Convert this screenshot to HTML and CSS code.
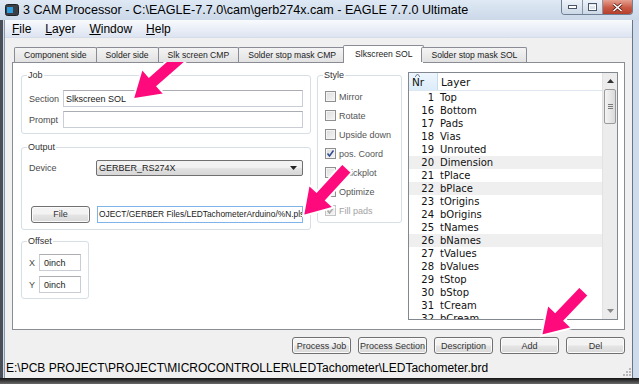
FILE: index.html
```html
<!DOCTYPE html>
<html lang="en">
<head>
    <meta charset="UTF-8">
    <meta name="viewport" content="width=device-width, initial-scale=1.0">
    <title>CAM Processor</title>
    <link rel="stylesheet" href="styles.css">
</head>
<body>
    <div class="window">
        <div class="title-bar">
            <div class="title-left">
                <svg class="app-icon" width="14" height="12" viewBox="0 0 14 12">
                    <rect x="0.5" y="0.5" width="13" height="11" rx="2" fill="#3b3f45" stroke="#1f2226"/>
                    <rect x="2" y="3" width="6" height="6" fill="#2c9ee0"/>
                </svg>
                <span class="title-text">3 CAM Processor - C:\EAGLE-7.7.0\cam\gerb274x.cam - EAGLE 7.7.0 Ultimate</span>
            </div>
            <div class="win-buttons">
                <div class="win-btn">
                    <svg width="9" height="4" viewBox="0 0 9 4"><rect x="0.5" y="0.5" width="8" height="3" fill="#fff" stroke="#4b5568"/></svg>
                </div>
                <div class="win-btn">
                    <svg width="9" height="8" viewBox="0 0 9 8"><rect x="0.5" y="0.5" width="8" height="7" fill="none" stroke="#4b5568"/><rect x="1.5" y="2.5" width="6" height="4" fill="none" stroke="#fff"/></svg>
                </div>
                <div class="win-btn close">
                    <svg width="11" height="9" viewBox="0 0 11 9"><path d="M1.5 1 L9.5 8 M9.5 1 L1.5 8" stroke="#5a2018" stroke-width="3"/><path d="M1.5 1 L9.5 8 M9.5 1 L1.5 8" stroke="#fff" stroke-width="1.6"/></svg>
                </div>
            </div>
        </div>

        <div class="client">
            <div class="menu-bar">
                <span class="menu-item"><u>F</u>ile</span>
                <span class="menu-item"><u>L</u>ayer</span>
                <span class="menu-item"><u>W</u>indow</span>
                <span class="menu-item"><u>H</u>elp</span>
            </div>

            <div class="main">
                <div class="tabs">
                    <div class="tab">Component side</div>
                    <div class="tab">Solder side</div>
                    <div class="tab">Slk screen CMP</div>
                    <div class="tab">Solder stop mask CMP</div>
                    <div class="tab active">Slkscreen SOL</div>
                    <div class="tab">Solder stop mask SOL</div>
                </div>

                <div class="tab-panel">
                    <div class="left-col">
                        <fieldset class="group job">
                            <legend>Job</legend>
                            <div class="field-row">
                                <span class="field-label">Section</span>
                                <div class="text-box">Slkscreen SOL</div>
                            </div>
                            <div class="field-row">
                                <span class="field-label">Prompt</span>
                                <div class="text-box"></div>
                            </div>
                        </fieldset>

                        <fieldset class="group output">
                            <legend>Output</legend>
                            <div class="field-row device-row">
                                <span class="field-label wide">Device</span>
                                <div class="combo">
                                    <span>GERBER_RS274X</span>
                                    <svg width="7" height="4" viewBox="0 0 7 4"><path d="M0 0 H7 L3.5 4 Z" fill="#222"/></svg>
                                </div>
                            </div>
                            <div class="field-row file-row">
                                <div class="btn file-btn">File</div>
                                <div class="text-box focused">OJECT/GERBER Files/LEDTachometerArduino<span class="caret"></span>/%N.pls</div>
                            </div>
                        </fieldset>

                        <fieldset class="group offset">
                            <legend>Offset</legend>
                            <div class="field-row">
                                <span class="field-label short">X</span>
                                <div class="text-box">0inch</div>
                            </div>
                            <div class="field-row">
                                <span class="field-label short">Y</span>
                                <div class="text-box">0inch</div>
                            </div>
                        </fieldset>
                    </div>

                    <fieldset class="group style">
                        <legend>Style</legend>
                        <div class="check-row"><span class="checkbox"></span>Mirror</div>
                        <div class="check-row"><span class="checkbox"></span>Rotate</div>
                        <div class="check-row"><span class="checkbox"></span>Upside down</div>
                        <div class="check-row"><span class="checkbox checked"><svg width="9" height="9" viewBox="0 0 9 9"><path d="M1.5 4.5 L3.5 7 L7.5 1.5" fill="none" stroke="#2f4c8f" stroke-width="1.5"/></svg></span>pos. Coord</div>
                        <div class="check-row"><span class="checkbox"></span>Quickplot</div>
                        <div class="check-row"><span class="checkbox"></span>Optimize</div>
                        <div class="check-row disabled"><span class="checkbox checked"><svg width="9" height="9" viewBox="0 0 9 9"><path d="M1.5 4.5 L3.5 7 L7.5 1.5" fill="none" stroke="#a9a9a9" stroke-width="1.5"/></svg></span>Fill pads</div>
                    </fieldset>

                    <div class="layer-list">
                        <div class="list-main">
                            <div class="list-head">
                                <div class="col-nr">
                                    <svg class="sort-mark" width="5" height="3" viewBox="0 0 5 3"><path d="M0 3 L2.5 0 L5 3" fill="none" stroke="#6d7f97"/></svg>
                                    Nr
                                </div>
                                <div class="col-name">Layer</div>
                            </div>
                            <div class="list-rows">
                                <div class="row"><span class="nr">1</span><span class="name">Top</span></div>
                                <div class="row"><span class="nr">16</span><span class="name">Bottom</span></div>
                                <div class="row"><span class="nr">17</span><span class="name">Pads</span></div>
                                <div class="row"><span class="nr">18</span><span class="name">Vias</span></div>
                                <div class="row"><span class="nr">19</span><span class="name">Unrouted</span></div>
                                <div class="row sel"><span class="nr">20</span><span class="name">Dimension</span></div>
                                <div class="row"><span class="nr">21</span><span class="name">tPlace</span></div>
                                <div class="row sel"><span class="nr">22</span><span class="name">bPlace</span></div>
                                <div class="row"><span class="nr">23</span><span class="name">tOrigins</span></div>
                                <div class="row"><span class="nr">24</span><span class="name">bOrigins</span></div>
                                <div class="row"><span class="nr">25</span><span class="name">tNames</span></div>
                                <div class="row sel"><span class="nr">26</span><span class="name">bNames</span></div>
                                <div class="row"><span class="nr">27</span><span class="name">tValues</span></div>
                                <div class="row"><span class="nr">28</span><span class="name">bValues</span></div>
                                <div class="row"><span class="nr">29</span><span class="name">tStop</span></div>
                                <div class="row"><span class="nr">30</span><span class="name">bStop</span></div>
                                <div class="row"><span class="nr">31</span><span class="name">tCream</span></div>
                                <div class="row"><span class="nr">32</span><span class="name">bCream</span></div>
                            </div>
                        </div>
                        <div class="scrollbar">
                            <div class="scroll-arrow">
                                <svg width="7" height="4" viewBox="0 0 7 4"><path d="M0 4 L3.5 0 L7 4 Z" fill="#333"/></svg>
                            </div>
                            <div class="scroll-thumb">
                                <svg width="5" height="5" viewBox="0 0 5 5"><path d="M0 0.5 H5 M0 2.5 H5 M0 4.5 H5" stroke="#7a7a7a"/></svg>
                            </div>
                            <div class="scroll-track"></div>
                            <div class="scroll-arrow">
                                <svg width="7" height="4" viewBox="0 0 7 4"><path d="M0 0 L3.5 4 L7 0 Z" fill="#888"/></svg>
                            </div>
                        </div>
                    </div>
                </div>

                <div class="button-row">
                    <div class="btn">Process Job</div>
                    <div class="btn">Process Section</div>
                    <div class="btn">Description</div>
                    <div class="btn">Add</div>
                    <div class="btn">Del</div>
                </div>
            </div>

            <div class="status-bar">
                <span class="status-text">E:\PCB PROJECT\PROJECT\MICROCONTROLLER\LEDTachometer\LEDTachometer.brd</span>
                <svg class="grip" width="9" height="9" viewBox="0 0 9 9">
                    <g fill="#b8b8b8">
                        <rect x="7" y="1" width="2" height="2"/>
                        <rect x="4" y="4" width="2" height="2"/><rect x="7" y="4" width="2" height="2"/>
                        <rect x="1" y="7" width="2" height="2"/><rect x="4" y="7" width="2" height="2"/><rect x="7" y="7" width="2" height="2"/>
                    </g>
                </svg>
            </div>
        </div>

        <div class="bottom-edge"></div>
    </div>

    <!-- annotation arrows drawn over the screenshot -->
    <svg class="arrows" width="639" height="384" viewBox="0 0 639 384">
        <g fill="#ff0a7c" stroke="#fff" stroke-width="2" stroke-linejoin="miter">
            <polygon transform="translate(181 57) rotate(138.8)" points="0,-6.5 37,-6.5 37,-17 64,0 37,17 37,6.5 0,6.5"/>
            <polygon transform="translate(347 168) rotate(132.5)" points="0,-6.5 38,-6.5 38,-17 65,0 38,17 38,6.5 0,6.5"/>
            <polygon transform="translate(584 291) rotate(133.7)" points="0,-6.5 35,-6.5 35,-17 62,0 35,17 35,6.5 0,6.5"/>
        </g>
    </svg>
</body>
</html>
```

FILE: styles.css
```css
* {
    box-sizing: border-box;
}

body {
    margin: 0;
    width: 639px;
    height: 384px;
    overflow: hidden;
    position: relative;
    font-family: "Liberation Sans", Arial, sans-serif;
    font-size: 9px;
    color: #333;
    background: #3a3f47;
}

.window {
    width: 639px;
    height: 384px;
    display: flex;
    flex-direction: column;
    /* dark desktop edge showing on the far left */
    background: linear-gradient(to right, #4b5058 3px, #cfdbea 3px);
}

/* Title bar */
.title-bar {
    height: 20px;
    flex-shrink: 0;
    display: flex;
    justify-content: space-between;
    align-items: flex-start;
    padding: 0 6px 0 5px;
    background: linear-gradient(#dfe9f5, #cbd8e8);
}

.title-left {
    height: 20px;
    display: flex;
    align-items: center;
    gap: 4px;
}

.title-text {
    font-size: 12.6px;
    color: #000;
}

.win-buttons {
    display: flex;
    height: 15px;
    border: 1px solid #6f7f94;
    border-top: none;
    border-radius: 0 0 4px 4px;
    overflow: hidden;
}

.win-btn {
    width: 20px;
    display: flex;
    align-items: center;
    justify-content: center;
    background: linear-gradient(#eef3f9, #ccd8e7);
    border-left: 1px solid #8795a8;
}

.win-btn:first-child {
    border-left: none;
}

.win-btn.close {
    width: 30px;
    background: linear-gradient(#e6a090, #c95a45 55%, #b53f2b);
}

/* Client area */
.client {
    flex: 1;
    display: flex;
    flex-direction: column;
    margin: 0 6px 0 4px;
    border-left: 1px solid #8796a8;
    border-right: 1px solid #65758a;
    background: #f0f0f0;
}

.menu-bar {
    height: 18px;
    flex-shrink: 0;
    display: flex;
    align-items: center;
    background: linear-gradient(#f8fafd, #dde4f1);
    border-bottom: 1px solid #d6dde9;
}

.menu-item {
    padding: 0 7px;
    font-size: 12px;
    color: #000;
}

.main {
    flex: 1;
    display: flex;
    flex-direction: column;
    padding: 9px 7px 3px 7px;
}

/* Tabs */
.tabs {
    height: 15px;
    display: flex;
    align-items: flex-end;
    margin-left: 2px;
    position: relative;
    z-index: 1;
}

.tab {
    height: 15px;
    padding: 0 9px;
    margin-left: -1px;
    display: flex;
    align-items: center;
    border: 1px solid #898c95;
    border-bottom: none;
    border-radius: 2px 2px 0 0;
    background: linear-gradient(#f4f4f4, #e2e2e2);
    font-size: 8.6px;
    color: #222;
}

.tab:first-child {
    margin-left: 0;
}

.tab.active {
    height: 18px;
    margin: 0 -2px -1px -3px;
    padding: 0 11px 2px;
    background: #fff;
}

.tab-panel {
    height: 268px;
    display: flex;
    align-items: flex-start;
    gap: 6px;
    padding: 7px 6px 0 8px;
    background: #fff;
    border: 1px solid #898c95;
}

.left-col {
    width: 290px;
    display: flex;
    flex-direction: column;
}

/* Group boxes */
.group {
    margin: 0;
    min-width: 0;
    padding: 0 7px 5px;
    border: 1px solid #d5dfe5;
    border-radius: 3px;
}

.group legend {
    padding: 0 1px;
    margin-left: -2px;
    font-size: 9px;
    line-height: 11px;
    color: #333;
}

.job .field-row:first-of-type {
    margin-top: 9px;
}

.field-row {
    height: 17px;
    display: flex;
    align-items: center;
}

.field-row + .field-row {
    margin-top: 4px;
}

.field-label {
    width: 34px;
    flex-shrink: 0;
    color: #4a4a4a;
}

.field-label.wide {
    width: 67px;
}

.field-label.short {
    width: 10px;
}

.text-box {
    flex: 1;
    height: 17px;
    padding: 0 2px;
    display: flex;
    align-items: center;
    white-space: nowrap;
    overflow: hidden;
    border: 1px solid #c9ced6;
    border-top-color: #abadb3;
    background: #fff;
    color: #222;
}

.text-box.focused {
    border-color: #7eb4ea;
    padding-left: 1px;
    font-size: 8.4px;
}

.caret {
    width: 1px;
    height: 11px;
    background: #000;
}

.output {
    margin-top: 8px;
    padding-bottom: 6px;
}

.output .device-row {
    height: 16px;
    margin-top: 7px;
}

.output .file-row {
    height: 18px;
    margin-top: 29px;
}

.combo {
    flex: 1;
    height: 16px;
    display: flex;
    align-items: center;
    justify-content: space-between;
    padding: 0 5px 0 2px;
    border: 1px solid #707070;
    border-radius: 2px;
    background: linear-gradient(#f2f2f2 45%, #e1e1e1 55%, #d7d7d7);
    color: #222;
}

.file-btn {
    width: 58px;
    height: 18px;
    margin: 0 7px 0 2px;
    flex-shrink: 0;
}

.offset {
    width: 68px;
    margin-top: 6px;
}

.offset .field-row:first-of-type {
    margin-top: 7px;
}

.offset .field-row + .field-row {
    margin-top: 5px;
}

.offset .text-box {
    padding-left: 4px;
}

/* Style checkboxes */
.style {
    width: 85px;
    padding-bottom: 2px;
}

.check-row {
    height: 19px;
    display: flex;
    align-items: center;
    gap: 3px;
    color: #555;
}

.check-row:first-of-type {
    margin-top: 6px;
}

.check-row.disabled {
    color: #a3a3a3;
}

.checkbox {
    width: 11px;
    height: 11px;
    display: flex;
    align-items: center;
    justify-content: center;
    border: 1px solid #8f8f8f;
    background: linear-gradient(135deg, #dcdcdc, #f6f6f6);
    box-shadow: inset 0 0 0 1px #f4f4f4;
}

.disabled .checkbox {
    border-color: #c4c4c4;
}

/* Layer list */
.layer-list {
    width: 210px;
    height: 248px;
    margin-top: 2px;
    display: flex;
    border: 1px solid #828790;
    background: #fff;
}

.list-main {
    flex: 1;
    display: flex;
    flex-direction: column;
    overflow: hidden;
    font-family: "DejaVu Sans", sans-serif;
    color: #111;
}

.list-head {
    height: 18px;
    flex-shrink: 0;
    display: flex;
    font-size: 10.5px;
    border-bottom: 1px solid #dfe8f1;
}

.col-nr {
    width: 29px;
    position: relative;
    display: flex;
    align-items: center;
    padding-left: 3px;
    background: linear-gradient(#eef6fd, #dcecfa);
    border-right: 1px solid #c9dcee;
}

.sort-mark {
    position: absolute;
    top: 1px;
    left: 6px;
}

.col-name {
    display: flex;
    align-items: center;
    padding-left: 3px;
}

.list-rows {
    overflow: hidden;
}

.row {
    height: 13px;
    display: flex;
    align-items: center;
    font-size: 10px;
    white-space: nowrap;
}

.row.sel {
    background: #efefef;
}

.row .nr {
    width: 25px;
    text-align: right;
}

.row .name {
    margin-left: 6px;
}

.scrollbar {
    width: 15px;
    display: flex;
    flex-direction: column;
    background: #ececec;
    border-left: 1px solid #e2e2e2;
}

.scroll-arrow {
    height: 16px;
    display: flex;
    align-items: center;
    justify-content: center;
}

.scroll-thumb {
    height: 35px;
    margin: 0 1px;
    display: flex;
    align-items: center;
    justify-content: center;
    border: 1px solid #9a9a9a;
    border-radius: 2px;
    background: linear-gradient(to right, #f4f4f4, #dadada);
}

.scroll-track {
    flex: 1;
}

/* Buttons */
.button-row {
    display: flex;
    justify-content: flex-end;
    gap: 7px;
    margin-top: 7px;
}

.btn {
    height: 17px;
    min-width: 59px;
    padding: 0 1px;
    display: flex;
    align-items: center;
    justify-content: center;
    border: 1px solid #707070;
    border-radius: 3px;
    background: linear-gradient(#f3f3f3 45%, #e4e4e4 55%, #d9d9d9);
    box-shadow: inset 0 0 0 1px #fbfbfb;
    color: #333;
}

/* Status bar */
.status-bar {
    height: 21px;
    flex-shrink: 0;
    display: flex;
    align-items: center;
    justify-content: space-between;
    padding: 0 1px;
}

.status-text {
    font-size: 12px;
    color: #000;
}

.grip {
    align-self: flex-end;
    margin-bottom: 2px;
}

.bottom-edge {
    height: 6px;
    flex-shrink: 0;
    background: linear-gradient(#121212, #6a6a6a);
}

.arrows {
    position: absolute;
    top: 0;
    left: 0;
    pointer-events: none;
}
```
